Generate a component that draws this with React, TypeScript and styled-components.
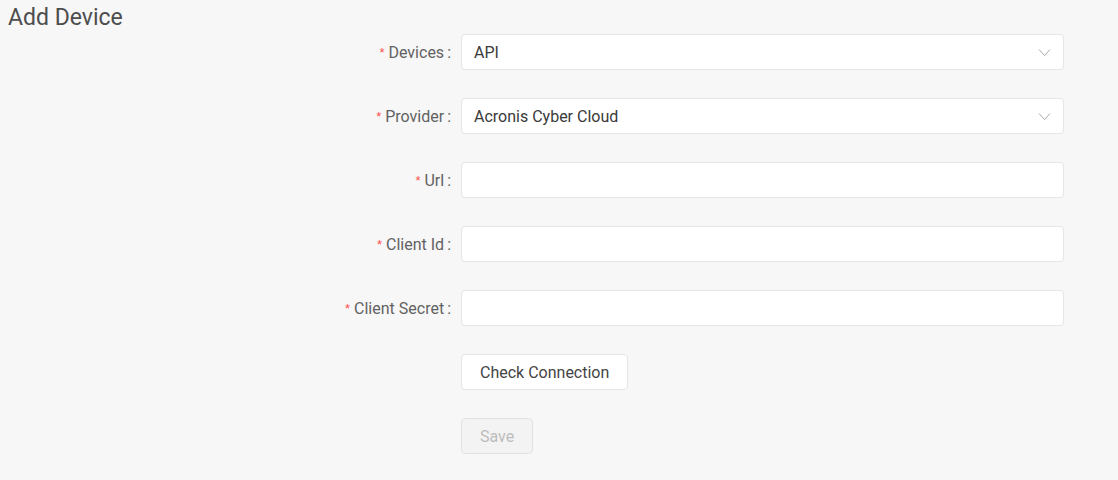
import React from 'react';
import { createGlobalStyle, styled } from 'styled-components';

const GlobalStyle = createGlobalStyle`
  html, body {
    margin: 0;
    padding: 0;
    background: #f7f7f7;
    font-family: Roboto, "Liberation Sans", Arial, sans-serif;
  }
`;

const Page = styled.div`
  width: 1118px;
  min-height: 480px;
  background: #f7f7f7;
  box-sizing: border-box;
  padding: 5px 0 0 0;
`;

const Title = styled.h2`
  margin: 0 0 0 8px;
  font-size: 23px;
  font-weight: 400;
  line-height: 26px;
  color: #4d4d4d;
`;

const Form = styled.form`
  display: grid;
  grid-template-columns: 461px 603px;
  row-gap: 28px;
  margin-top: 3px;
`;

const Label = styled.label`
  display: flex;
  align-items: center;
  justify-content: flex-end;
  height: 36px;
  font-size: 16px;
  color: #626262;
  white-space: nowrap;
  &::after {
    content: ':';
    margin: 0 10px 0 3px;
  }
`;

const Required = styled.span`
  color: #ff4d4f;
  font-size: 13px;
  margin-right: 4px;
  font-family: SimSun, "Liberation Sans", sans-serif;
`;

const Field = styled.div<{ $select?: boolean }>`
  height: 36px;
  box-sizing: border-box;
  background: #fff;
  border: 1px solid #e6e6e6;
  border-radius: 4px;
  display: flex;
  align-items: center;
  padding: 0 12px;
  font-size: 16px;
  color: #3a3a3a;
  justify-content: space-between;
  cursor: ${(p) => (p.$select ? 'pointer' : 'text')};
`;

const Chevron = styled.svg`
  width: 13px;
  height: 13px;
  color: #aaa;
`;

const Spacer = styled.div``;

const Button = styled.button<{ $disabled?: boolean }>`
  justify-self: start;
  height: 36px;
  box-sizing: border-box;
  padding: 0 18px;
  font-family: inherit;
  font-size: 16px;
  border-radius: 4px;
  border: 1px solid ${(p) => (p.$disabled ? '#e2e2e2' : '#e6e6e6')};
  background: ${(p) => (p.$disabled ? '#f3f3f3' : '#fff')};
  color: ${(p) => (p.$disabled ? '#bdbdbd' : '#444')};
  cursor: ${(p) => (p.$disabled ? 'not-allowed' : 'pointer')};
`;

const ChevronDown = () => (
  <Chevron viewBox="0 0 13 13" fill="none" stroke="currentColor" strokeWidth="1">
    <path d="M1 3.5 L6.5 9.5 L12 3.5" />
  </Chevron>
);

const rows: { label: string; value?: string; select?: boolean }[] = [
  { label: 'Devices', value: 'API', select: true },
  { label: 'Provider', value: 'Acronis Cyber Cloud', select: true },
  { label: 'Url' },
  { label: 'Client Id' },
  { label: 'Client Secret' },
];

const App = () => (
  <Page>
    <GlobalStyle />
    <Title>Add Device</Title>
    <Form onSubmit={(e) => e.preventDefault()}>
      {rows.map((r) => (
        <React.Fragment key={r.label}>
          <Label>
            <Required>*</Required>
            {r.label}
          </Label>
          <Field $select={r.select}>
            <span>{r.value}</span>
            {r.select && <ChevronDown />}
          </Field>
        </React.Fragment>
      ))}
      <Spacer />
      <Button type="button">Check Connection</Button>
      <Spacer />
      <Button type="button" $disabled disabled>
        Save
      </Button>
    </Form>
  </Page>
);

export default App;
